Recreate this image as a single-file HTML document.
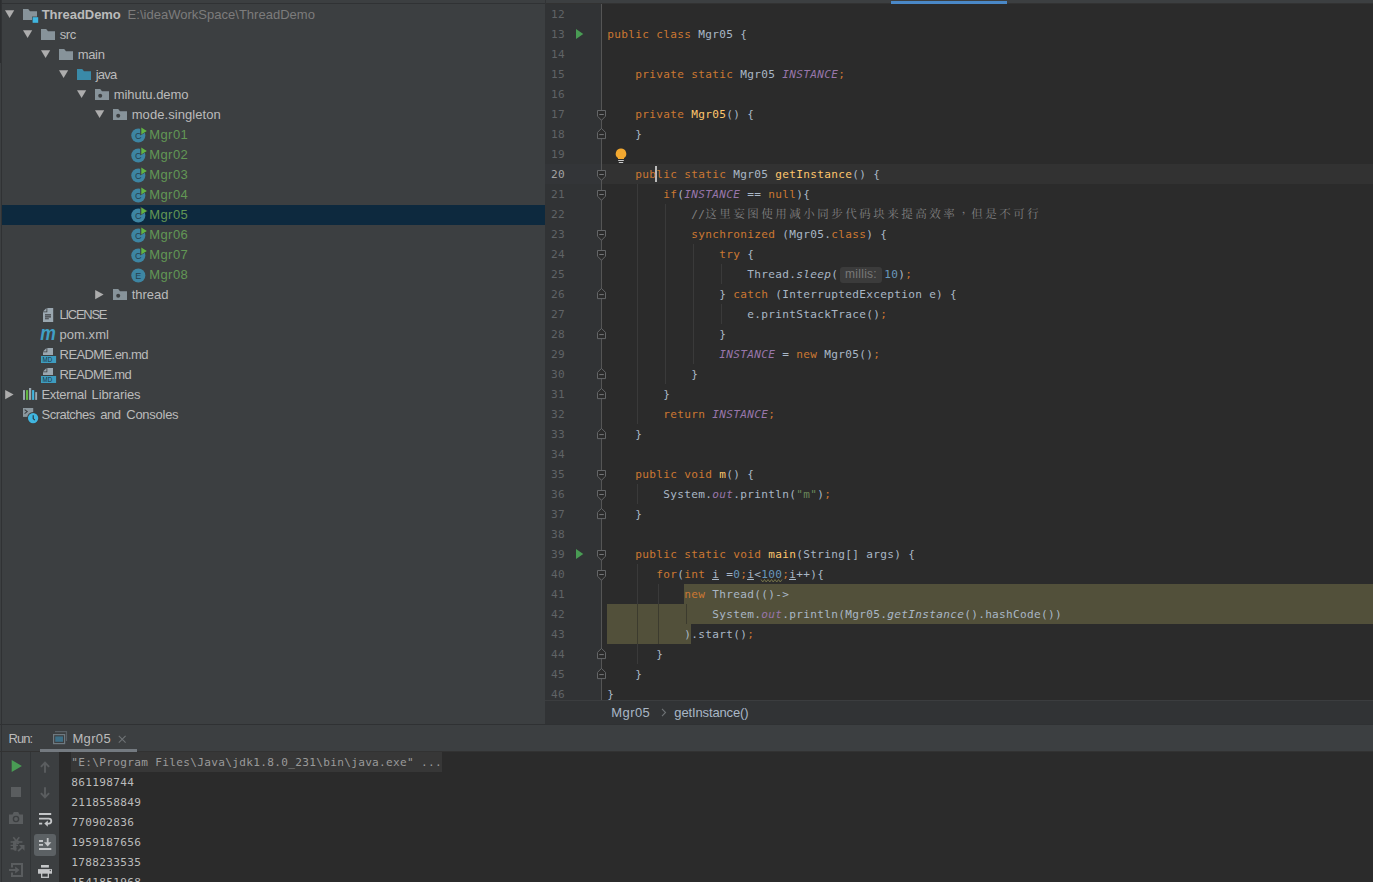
<!DOCTYPE html>
<html><head><meta charset="utf-8"><title>ThreadDemo</title>
<style>
html,body{margin:0;padding:0}
body{width:1373px;height:882px;overflow:hidden;background:#3c3f41;position:relative;font-family:'Liberation Sans', sans-serif;}
.b{position:absolute}
.a{position:absolute;overflow:visible}
.t{position:absolute;white-space:pre}
.cl{position:absolute;left:607.3px;height:20px;line-height:20px;white-space:pre;font:11.1px/20px 'DejaVu Sans Mono', 'Liberation Mono', monospace;color:#a9b7c6;letter-spacing:.317px}
.ln{position:absolute;left:545px;width:19.9px;text-align:right;height:20px;font:11.1px/20px 'DejaVu Sans Mono', 'Liberation Mono', monospace;color:#606366;letter-spacing:.317px}
.k{color:#cc7832}.f{color:#9876aa;font-style:italic}.m{color:#ffc66d}.n{color:#6897bb}.s{color:#6a8759}.c{color:#808080}.i{font-style:italic}
.u{position:relative}.u::after{content:'';position:absolute;left:-0.6px;width:7px;top:11.4px;height:1px;background:#a9b7c6}
.cj{font-family:'Liberation Mono', 'Noto Serif CJK SC', serif;font-size:11.5px;line-height:0}
.con{position:absolute;left:71.3px;height:20px;white-space:pre;font:11.1px/20px 'DejaVu Sans Mono', 'Liberation Mono', monospace;color:#bbbbbb;letter-spacing:.317px}
</style></head><body>

<div class="b" style="left:0;top:3px;width:545px;height:1px;background:#303234"></div>
<div class="b" style="left:545px;top:0;width:1px;height:4px;background:#323436;z-index:2"></div>
<div class="b" style="left:0;top:0;width:1px;height:63px;background:#2c2e30"></div>
<div class="b" style="left:1px;top:0;width:1px;height:882px;background:#303234;z-index:3"></div>
<div class="b" style="left:2px;top:205px;width:543px;height:20px;background:#0d293e"></div>
<svg class="a" style="left:5px;top:10px" width="10" height="9" viewBox="0 0 10 9"><path d="M0 0.3H9.2L4.6 8Z" fill="#adadad"/></svg>
<svg class="a" style="left:23px;top:9px" width="16" height="15" viewBox="0 0 16 15"><path d="M0 0H5.2L7 2.2H14V11H0Z" fill="#87939a"/><rect x="9" y="7.6" width="6.2" height="6.2" fill="#3c3f41"/><rect x="9.6" y="8.2" width="5.6" height="5.6" fill="#40b6e0"/></svg>
<span class="t" style="left:41.70px;top:4.50px;font:bold 13px 'Liberation Sans', sans-serif;line-height:20px;color:#bbbbbb;letter-spacing:-0.041px;">ThreadDemo</span>
<span class="t" style="left:127.60px;top:4.50px;font:13px 'Liberation Sans', sans-serif;line-height:20px;color:#7c7c7c;letter-spacing:0.015px;">E:\ideaWorkSpace\ThreadDemo</span>
<svg class="a" style="left:23px;top:30px" width="10" height="9" viewBox="0 0 10 9"><path d="M0 0.3H9.2L4.6 8Z" fill="#adadad"/></svg>
<svg class="a" style="left:41px;top:29px" width="16" height="15" viewBox="0 0 16 15"><path d="M0 0H5.2L7 2.2H14V11H0Z" fill="#87939a"/></svg>
<span class="t" style="left:59.70px;top:24.50px;font:13px 'Liberation Sans', sans-serif;line-height:20px;color:#bbbbbb;letter-spacing:-0.322px;">src</span>
<svg class="a" style="left:41px;top:50px" width="10" height="9" viewBox="0 0 10 9"><path d="M0 0.3H9.2L4.6 8Z" fill="#adadad"/></svg>
<svg class="a" style="left:59px;top:49px" width="16" height="15" viewBox="0 0 16 15"><path d="M0 0H5.2L7 2.2H14V11H0Z" fill="#87939a"/></svg>
<span class="t" style="left:77.70px;top:44.50px;font:13px 'Liberation Sans', sans-serif;line-height:20px;color:#bbbbbb;letter-spacing:-0.329px;">main</span>
<svg class="a" style="left:59px;top:70px" width="10" height="9" viewBox="0 0 10 9"><path d="M0 0.3H9.2L4.6 8Z" fill="#adadad"/></svg>
<svg class="a" style="left:77px;top:69px" width="16" height="15" viewBox="0 0 16 15"><path d="M0 0H5.2L7 2.2H14V11H0Z" fill="#3a8aa8"/></svg>
<span class="t" style="left:95.70px;top:64.50px;font:13px 'Liberation Sans', sans-serif;line-height:20px;color:#bbbbbb;letter-spacing:-0.753px;">java</span>
<svg class="a" style="left:77px;top:90px" width="10" height="9" viewBox="0 0 10 9"><path d="M0 0.3H9.2L4.6 8Z" fill="#adadad"/></svg>
<svg class="a" style="left:95px;top:89px" width="16" height="15" viewBox="0 0 16 15"><path d="M0 0H5.2L7 2.2H14V11H0Z" fill="#87939a"/><circle cx="5.2" cy="6.7" r="2" fill="#3c3f41"/></svg>
<span class="t" style="left:113.70px;top:84.50px;font:13px 'Liberation Sans', sans-serif;line-height:20px;color:#bbbbbb;letter-spacing:-0.026px;">mihutu.demo</span>
<svg class="a" style="left:95px;top:110px" width="10" height="9" viewBox="0 0 10 9"><path d="M0 0.3H9.2L4.6 8Z" fill="#adadad"/></svg>
<svg class="a" style="left:113px;top:109px" width="16" height="15" viewBox="0 0 16 15"><path d="M0 0H5.2L7 2.2H14V11H0Z" fill="#87939a"/><circle cx="5.2" cy="6.7" r="2" fill="#3c3f41"/></svg>
<span class="t" style="left:131.70px;top:104.50px;font:13px 'Liberation Sans', sans-serif;line-height:20px;color:#bbbbbb;letter-spacing:0.071px;">mode.singleton</span>
<svg class="a" style="left:130.8px;top:126.5px" width="17" height="17" viewBox="0 0 17 17"><circle cx="7.3" cy="8.5" r="7.05" fill="#3d85a2"/><text x="7.2" y="11.6" font-family="Liberation Sans, sans-serif" font-size="9" text-anchor="middle" fill="#24404e">C</text><path d="M9.2 -0.5L17 4L9.2 8.6Z" fill="#3c3f41"/><path d="M10.3 0.5L15.8 4L10.3 7.4Z" fill="#62b543"/></svg>
<span class="t" style="left:149.20px;top:124.50px;font:13px 'Liberation Sans', sans-serif;line-height:20px;color:#629755;letter-spacing:0.435px;">Mgr01</span>
<svg class="a" style="left:130.8px;top:146.5px" width="17" height="17" viewBox="0 0 17 17"><circle cx="7.3" cy="8.5" r="7.05" fill="#3d85a2"/><text x="7.2" y="11.6" font-family="Liberation Sans, sans-serif" font-size="9" text-anchor="middle" fill="#24404e">C</text><path d="M9.2 -0.5L17 4L9.2 8.6Z" fill="#3c3f41"/><path d="M10.3 0.5L15.8 4L10.3 7.4Z" fill="#62b543"/></svg>
<span class="t" style="left:149.20px;top:144.50px;font:13px 'Liberation Sans', sans-serif;line-height:20px;color:#629755;letter-spacing:0.435px;">Mgr02</span>
<svg class="a" style="left:130.8px;top:166.5px" width="17" height="17" viewBox="0 0 17 17"><circle cx="7.3" cy="8.5" r="7.05" fill="#3d85a2"/><text x="7.2" y="11.6" font-family="Liberation Sans, sans-serif" font-size="9" text-anchor="middle" fill="#24404e">C</text><path d="M9.2 -0.5L17 4L9.2 8.6Z" fill="#3c3f41"/><path d="M10.3 0.5L15.8 4L10.3 7.4Z" fill="#62b543"/></svg>
<span class="t" style="left:149.20px;top:164.50px;font:13px 'Liberation Sans', sans-serif;line-height:20px;color:#629755;letter-spacing:0.435px;">Mgr03</span>
<svg class="a" style="left:130.8px;top:186.5px" width="17" height="17" viewBox="0 0 17 17"><circle cx="7.3" cy="8.5" r="7.05" fill="#3d85a2"/><text x="7.2" y="11.6" font-family="Liberation Sans, sans-serif" font-size="9" text-anchor="middle" fill="#24404e">C</text><path d="M9.2 -0.5L17 4L9.2 8.6Z" fill="#3c3f41"/><path d="M10.3 0.5L15.8 4L10.3 7.4Z" fill="#62b543"/></svg>
<span class="t" style="left:149.20px;top:184.50px;font:13px 'Liberation Sans', sans-serif;line-height:20px;color:#629755;letter-spacing:0.435px;">Mgr04</span>
<svg class="a" style="left:130.8px;top:206.5px" width="17" height="17" viewBox="0 0 17 17"><circle cx="7.3" cy="8.5" r="7.05" fill="#3d85a2"/><text x="7.2" y="11.6" font-family="Liberation Sans, sans-serif" font-size="9" text-anchor="middle" fill="#24404e">C</text><path d="M9.2 -0.5L17 4L9.2 8.6Z" fill="#3c3f41"/><path d="M10.3 0.5L15.8 4L10.3 7.4Z" fill="#62b543"/></svg>
<span class="t" style="left:149.20px;top:204.50px;font:13px 'Liberation Sans', sans-serif;line-height:20px;color:#629755;letter-spacing:0.435px;">Mgr05</span>
<svg class="a" style="left:130.8px;top:226.5px" width="17" height="17" viewBox="0 0 17 17"><circle cx="7.3" cy="8.5" r="7.05" fill="#3d85a2"/><text x="7.2" y="11.6" font-family="Liberation Sans, sans-serif" font-size="9" text-anchor="middle" fill="#24404e">C</text><path d="M9.2 -0.5L17 4L9.2 8.6Z" fill="#3c3f41"/><path d="M10.3 0.5L15.8 4L10.3 7.4Z" fill="#62b543"/></svg>
<span class="t" style="left:149.20px;top:224.50px;font:13px 'Liberation Sans', sans-serif;line-height:20px;color:#629755;letter-spacing:0.435px;">Mgr06</span>
<svg class="a" style="left:130.8px;top:246.5px" width="17" height="17" viewBox="0 0 17 17"><circle cx="7.3" cy="8.5" r="7.05" fill="#3d85a2"/><text x="7.2" y="11.6" font-family="Liberation Sans, sans-serif" font-size="9" text-anchor="middle" fill="#24404e">C</text><path d="M9.2 -0.5L17 4L9.2 8.6Z" fill="#3c3f41"/><path d="M10.3 0.5L15.8 4L10.3 7.4Z" fill="#62b543"/></svg>
<span class="t" style="left:149.20px;top:244.50px;font:13px 'Liberation Sans', sans-serif;line-height:20px;color:#629755;letter-spacing:0.435px;">Mgr07</span>
<svg class="a" style="left:130.8px;top:266.5px" width="17" height="17" viewBox="0 0 17 17"><circle cx="7.3" cy="8.5" r="7.05" fill="#3d85a2"/><text x="7.2" y="11.6" font-family="Liberation Sans, sans-serif" font-size="9" text-anchor="middle" fill="#24404e">E</text></svg>
<span class="t" style="left:149.20px;top:264.50px;font:13px 'Liberation Sans', sans-serif;line-height:20px;color:#629755;letter-spacing:0.435px;">Mgr08</span>
<svg class="a" style="left:94.5px;top:289.9px" width="9" height="10" viewBox="0 0 9 10"><path d="M0.2 0V9.2L8.6 4.6Z" fill="#adadad"/></svg>
<svg class="a" style="left:113px;top:289px" width="16" height="15" viewBox="0 0 16 15"><path d="M0 0H5.2L7 2.2H14V11H0Z" fill="#87939a"/><circle cx="5.2" cy="6.7" r="2" fill="#3c3f41"/></svg>
<span class="t" style="left:131.70px;top:284.50px;font:13px 'Liberation Sans', sans-serif;line-height:20px;color:#bbbbbb;letter-spacing:-0.015px;">thread</span>
<svg class="a" style="left:43px;top:308px" width="12" height="14" viewBox="0 0 12 14"><path d="M4.3 0H10.2V14H0V4.3H4.3Z" fill="#9aa7b0"/><path d="M0 3.5L3.5 0V3.5Z" fill="#9aa7b0"/><path d="M2 6.9H8M2 8.9H8M2 10.8H5.8" stroke="#3c3f41" stroke-width="1.1"/></svg>
<span class="t" style="left:59.60px;top:304.50px;font:13px 'Liberation Sans', sans-serif;line-height:20px;color:#bbbbbb;letter-spacing:-1.290px;">LICENSE</span>
<svg class="a" style="left:40px;top:328px" width="17" height="14" viewBox="0 0 17 14"><text x="0.2" y="12.2" font-family="Liberation Sans, sans-serif" font-size="20" font-weight="bold" font-style="italic" textLength="15.6" lengthAdjust="spacingAndGlyphs" fill="#409fc6">m</text></svg>
<span class="t" style="left:59.60px;top:324.50px;font:13px 'Liberation Sans', sans-serif;line-height:20px;color:#bbbbbb;letter-spacing:0.029px;">pom.xml</span>
<svg class="a" style="left:41px;top:348px" width="16" height="15" viewBox="0 0 16 15"><path d="M6.3 0H12V7H2V4.3H6.3Z" fill="#9aa7b0"/><path d="M2 3.5L5.5 0V3.5Z" fill="#9aa7b0"/><rect x="0" y="8" width="15.1" height="7" fill="#3e9cbf"/><text x="1.6" y="13.9" font-family="Liberation Sans, sans-serif" font-size="6.6" textLength="9.6" lengthAdjust="spacingAndGlyphs" fill="#1d3340">MD</text></svg>
<span class="t" style="left:59.60px;top:344.50px;font:13px 'Liberation Sans', sans-serif;line-height:20px;color:#bbbbbb;letter-spacing:-0.598px;">README.en.md</span>
<svg class="a" style="left:41px;top:368px" width="16" height="15" viewBox="0 0 16 15"><path d="M6.3 0H12V7H2V4.3H6.3Z" fill="#9aa7b0"/><path d="M2 3.5L5.5 0V3.5Z" fill="#9aa7b0"/><rect x="0" y="8" width="15.1" height="7" fill="#3e9cbf"/><text x="1.6" y="13.9" font-family="Liberation Sans, sans-serif" font-size="6.6" textLength="9.6" lengthAdjust="spacingAndGlyphs" fill="#1d3340">MD</text></svg>
<span class="t" style="left:59.60px;top:364.50px;font:13px 'Liberation Sans', sans-serif;line-height:20px;color:#bbbbbb;letter-spacing:-0.650px;">README.md</span>
<svg class="a" style="left:4.5px;top:389.9px" width="9" height="10" viewBox="0 0 9 10"><path d="M0.2 0V9.2L8.6 4.6Z" fill="#adadad"/></svg>
<svg class="a" style="left:23px;top:387.9px" width="15" height="12" viewBox="0 0 15 12"><rect x="0" y="2.1" width="2" height="9.8" fill="#9aa7b0"/><rect x="3" y="2.1" width="2.1" height="9.8" fill="#62b543"/><rect x="6" y="0" width="2.2" height="11.9" fill="#9aa7b0"/><rect x="9.1" y="2.1" width="2.1" height="9.8" fill="#40b6e0"/><rect x="12.2" y="4.1" width="1.9" height="7.8" fill="#9aa7b0"/></svg>
<span class="t" style="left:41.50px;top:384.50px;font:13px 'Liberation Sans', sans-serif;line-height:20px;color:#bbbbbb;letter-spacing:-0.329px;">External</span>
<span class="t" style="left:91.60px;top:384.50px;font:13px 'Liberation Sans', sans-serif;line-height:20px;color:#bbbbbb;letter-spacing:-0.107px;">Libraries</span>
<svg class="a" style="left:23px;top:407.9px" width="17" height="16" viewBox="0 0 17 16"><path d="M0 0H10.2V8.9H0Z" fill="#8b979e"/><path d="M1.6 1.6L4.2 3.6L1.6 5.6" stroke="#3c3f41" stroke-width="1.1" fill="none"/><circle cx="10.1" cy="10.1" r="6" fill="#3c3f41"/><circle cx="10.1" cy="10.1" r="5.15" fill="#40b6e0"/><path d="M10.2 7.3V10.6L11.8 12.2" stroke="#23323a" stroke-width="1.1" fill="none"/></svg>
<span class="t" style="left:41.50px;top:404.50px;font:13px 'Liberation Sans', sans-serif;line-height:20px;color:#bbbbbb;letter-spacing:-0.502px;">Scratches</span>
<span class="t" style="left:100.30px;top:404.50px;font:13px 'Liberation Sans', sans-serif;line-height:20px;color:#bbbbbb;letter-spacing:-0.502px;">and</span>
<span class="t" style="left:126.30px;top:404.50px;font:13px 'Liberation Sans', sans-serif;line-height:20px;color:#bbbbbb;letter-spacing:-0.272px;">Consoles</span>
<div class="b" style="left:545px;top:0;width:828px;height:4px;background:#3c3f41"></div>
<div class="b" style="left:545px;top:3px;width:828px;height:1px;background:#323232"></div>
<div class="b" style="left:891px;top:1px;width:116px;height:3px;background:#4a88c7"></div>
<div class="b" style="left:545px;top:4px;width:57px;height:696px;background:#313335"></div>
<div class="b" style="left:602px;top:4px;width:771px;height:696px;background:#2b2b2b"></div>
<div class="b" style="left:545px;top:164px;width:57px;height:20px;background:#333538"></div>
<div class="b" style="left:602px;top:164px;width:771px;height:20px;background:#323232"></div>
<div class="b" style="left:684px;top:584px;width:689px;height:20px;background:#52503a"></div>
<div class="b" style="left:607px;top:604px;width:766px;height:20px;background:#52503a"></div>
<div class="b" style="left:607px;top:624px;width:84px;height:20px;background:#52503a"></div>
<div class="b" style="left:601px;top:4px;width:1px;height:696px;background:#555555"></div>
<div class="b" style="left:637px;top:184px;width:1px;height:240px;background:#3a3a3a"></div>
<div class="b" style="left:665px;top:204px;width:1px;height:180px;background:#3a3a3a"></div>
<div class="b" style="left:693px;top:244px;width:1px;height:120px;background:#3a3a3a"></div>
<div class="b" style="left:721px;top:264px;width:1px;height:20px;background:#3a3a3a"></div>
<div class="b" style="left:721px;top:304px;width:1px;height:20px;background:#3a3a3a"></div>
<div class="b" style="left:637px;top:484px;width:1px;height:20px;background:#3a3a3a"></div>
<div class="b" style="left:637px;top:564px;width:1px;height:100px;background:#3a3a3a"></div>
<div class="b" style="left:658px;top:584px;width:1px;height:60px;background:#3a3a3a"></div>
<div class="b" style="left:686px;top:604px;width:1px;height:20px;background:#3a3a3a"></div>
<div class="b" style="left:637px;top:604px;width:1px;height:40px;background:#3c3b2e"></div>
<div class="b" style="left:658px;top:604px;width:1px;height:40px;background:#3c3b2e"></div>
<div class="b" style="left:686px;top:604px;width:1px;height:20px;background:#3c3b2e"></div>
<div class="ln" style="top:4.5px">12</div>
<div class="ln" style="top:24.5px">13</div>
<div class="ln" style="top:44.5px">14</div>
<div class="ln" style="top:64.5px">15</div>
<div class="ln" style="top:84.5px">16</div>
<div class="ln" style="top:104.5px">17</div>
<div class="ln" style="top:124.5px">18</div>
<div class="ln" style="top:144.5px">19</div>
<div class="ln" style="top:164.5px;color:#a4a3a3">20</div>
<div class="ln" style="top:184.5px">21</div>
<div class="ln" style="top:204.5px">22</div>
<div class="ln" style="top:224.5px">23</div>
<div class="ln" style="top:244.5px">24</div>
<div class="ln" style="top:264.5px">25</div>
<div class="ln" style="top:284.5px">26</div>
<div class="ln" style="top:304.5px">27</div>
<div class="ln" style="top:324.5px">28</div>
<div class="ln" style="top:344.5px">29</div>
<div class="ln" style="top:364.5px">30</div>
<div class="ln" style="top:384.5px">31</div>
<div class="ln" style="top:404.5px">32</div>
<div class="ln" style="top:424.5px">33</div>
<div class="ln" style="top:444.5px">34</div>
<div class="ln" style="top:464.5px">35</div>
<div class="ln" style="top:484.5px">36</div>
<div class="ln" style="top:504.5px">37</div>
<div class="ln" style="top:524.5px">38</div>
<div class="ln" style="top:544.5px">39</div>
<div class="ln" style="top:564.5px">40</div>
<div class="ln" style="top:584.5px">41</div>
<div class="ln" style="top:604.5px">42</div>
<div class="ln" style="top:624.5px">43</div>
<div class="ln" style="top:644.5px">44</div>
<div class="ln" style="top:664.5px">45</div>
<div class="ln" style="top:684.5px">46</div>
<svg class="a" style="left:576px;top:29px" width="8" height="10" viewBox="0 0 8 10"><path d="M0 0L7.3 5L0 10Z" fill="#499c54"/></svg>
<svg class="a" style="left:576px;top:549px" width="8" height="10" viewBox="0 0 8 10"><path d="M0 0L7.3 5L0 10Z" fill="#499c54"/></svg>
<svg class="a" style="left:597px;top:110px" width="9" height="11" viewBox="0 0 9 11"><path d="M0.5 0.5H8.5V6.2L4.5 10.3L0.5 6.2Z" fill="#2b2b2b" stroke="#646668" stroke-width="1"/><path d="M2.3 4.5H6.8" stroke="#747678" stroke-width="1"/></svg>
<svg class="a" style="left:597px;top:170px" width="9" height="11" viewBox="0 0 9 11"><path d="M0.5 0.5H8.5V6.2L4.5 10.3L0.5 6.2Z" fill="#2b2b2b" stroke="#646668" stroke-width="1"/><path d="M2.3 4.5H6.8" stroke="#747678" stroke-width="1"/></svg>
<svg class="a" style="left:597px;top:190px" width="9" height="11" viewBox="0 0 9 11"><path d="M0.5 0.5H8.5V6.2L4.5 10.3L0.5 6.2Z" fill="#2b2b2b" stroke="#646668" stroke-width="1"/><path d="M2.3 4.5H6.8" stroke="#747678" stroke-width="1"/></svg>
<svg class="a" style="left:597px;top:230px" width="9" height="11" viewBox="0 0 9 11"><path d="M0.5 0.5H8.5V6.2L4.5 10.3L0.5 6.2Z" fill="#2b2b2b" stroke="#646668" stroke-width="1"/><path d="M2.3 4.5H6.8" stroke="#747678" stroke-width="1"/></svg>
<svg class="a" style="left:597px;top:250px" width="9" height="11" viewBox="0 0 9 11"><path d="M0.5 0.5H8.5V6.2L4.5 10.3L0.5 6.2Z" fill="#2b2b2b" stroke="#646668" stroke-width="1"/><path d="M2.3 4.5H6.8" stroke="#747678" stroke-width="1"/></svg>
<svg class="a" style="left:597px;top:470px" width="9" height="11" viewBox="0 0 9 11"><path d="M0.5 0.5H8.5V6.2L4.5 10.3L0.5 6.2Z" fill="#2b2b2b" stroke="#646668" stroke-width="1"/><path d="M2.3 4.5H6.8" stroke="#747678" stroke-width="1"/></svg>
<svg class="a" style="left:597px;top:490px" width="9" height="11" viewBox="0 0 9 11"><path d="M0.5 0.5H8.5V6.2L4.5 10.3L0.5 6.2Z" fill="#2b2b2b" stroke="#646668" stroke-width="1"/><path d="M2.3 4.5H6.8" stroke="#747678" stroke-width="1"/></svg>
<svg class="a" style="left:597px;top:550px" width="9" height="11" viewBox="0 0 9 11"><path d="M0.5 0.5H8.5V6.2L4.5 10.3L0.5 6.2Z" fill="#2b2b2b" stroke="#646668" stroke-width="1"/><path d="M2.3 4.5H6.8" stroke="#747678" stroke-width="1"/></svg>
<svg class="a" style="left:597px;top:570px" width="9" height="11" viewBox="0 0 9 11"><path d="M0.5 0.5H8.5V6.2L4.5 10.3L0.5 6.2Z" fill="#2b2b2b" stroke="#646668" stroke-width="1"/><path d="M2.3 4.5H6.8" stroke="#747678" stroke-width="1"/></svg>
<svg class="a" style="left:597px;top:128px" width="9" height="11" viewBox="0 0 9 11"><path d="M0.5 10.6H8.5V4.4L4.5 0.4L0.5 4.4Z" fill="#2b2b2b" stroke="#646668" stroke-width="1"/><path d="M2.3 6.6H6.8" stroke="#747678" stroke-width="1"/></svg>
<svg class="a" style="left:597px;top:288px" width="9" height="11" viewBox="0 0 9 11"><path d="M0.5 10.6H8.5V4.4L4.5 0.4L0.5 4.4Z" fill="#2b2b2b" stroke="#646668" stroke-width="1"/><path d="M2.3 6.6H6.8" stroke="#747678" stroke-width="1"/></svg>
<svg class="a" style="left:597px;top:328px" width="9" height="11" viewBox="0 0 9 11"><path d="M0.5 10.6H8.5V4.4L4.5 0.4L0.5 4.4Z" fill="#2b2b2b" stroke="#646668" stroke-width="1"/><path d="M2.3 6.6H6.8" stroke="#747678" stroke-width="1"/></svg>
<svg class="a" style="left:597px;top:368px" width="9" height="11" viewBox="0 0 9 11"><path d="M0.5 10.6H8.5V4.4L4.5 0.4L0.5 4.4Z" fill="#2b2b2b" stroke="#646668" stroke-width="1"/><path d="M2.3 6.6H6.8" stroke="#747678" stroke-width="1"/></svg>
<svg class="a" style="left:597px;top:388px" width="9" height="11" viewBox="0 0 9 11"><path d="M0.5 10.6H8.5V4.4L4.5 0.4L0.5 4.4Z" fill="#2b2b2b" stroke="#646668" stroke-width="1"/><path d="M2.3 6.6H6.8" stroke="#747678" stroke-width="1"/></svg>
<svg class="a" style="left:597px;top:428px" width="9" height="11" viewBox="0 0 9 11"><path d="M0.5 10.6H8.5V4.4L4.5 0.4L0.5 4.4Z" fill="#2b2b2b" stroke="#646668" stroke-width="1"/><path d="M2.3 6.6H6.8" stroke="#747678" stroke-width="1"/></svg>
<svg class="a" style="left:597px;top:508px" width="9" height="11" viewBox="0 0 9 11"><path d="M0.5 10.6H8.5V4.4L4.5 0.4L0.5 4.4Z" fill="#2b2b2b" stroke="#646668" stroke-width="1"/><path d="M2.3 6.6H6.8" stroke="#747678" stroke-width="1"/></svg>
<svg class="a" style="left:597px;top:648px" width="9" height="11" viewBox="0 0 9 11"><path d="M0.5 10.6H8.5V4.4L4.5 0.4L0.5 4.4Z" fill="#2b2b2b" stroke="#646668" stroke-width="1"/><path d="M2.3 6.6H6.8" stroke="#747678" stroke-width="1"/></svg>
<svg class="a" style="left:597px;top:668px" width="9" height="11" viewBox="0 0 9 11"><path d="M0.5 10.6H8.5V4.4L4.5 0.4L0.5 4.4Z" fill="#2b2b2b" stroke="#646668" stroke-width="1"/><path d="M2.3 6.6H6.8" stroke="#747678" stroke-width="1"/></svg>
<svg class="a" style="left:615px;top:148.4px" width="12" height="16" viewBox="0 0 12 16"><path d="M6 0.5A5.2 5.2 0 0 1 9 10V11H3V10A5.2 5.2 0 0 1 6 0.5Z" fill="#f2a830"/><path d="M3.2 12.5H8.8M3.8 14.5H8.2" stroke="#c9c9c9" stroke-width="1"/></svg>
<div class="b" style="left:655px;top:166px;width:2px;height:16px;background:#bbbbbb"></div>
<div class="cl" style="top:24.6px"><span class="k">public class</span> Mgr05 {</div>
<div class="cl" style="top:64.6px">    <span class="k">private static</span> Mgr05 <span class="f">INSTANCE</span><span class="k">;</span></div>
<div class="cl" style="top:104.6px">    <span class="k">private</span> <span class="m">Mgr05</span>() {</div>
<div class="cl" style="top:124.6px">    }</div>
<div class="cl" style="top:164.6px">    <span class="k">public static</span> Mgr05 <span class="m">getInstance</span>() {</div>
<div class="cl" style="top:184.6px">        <span class="k">if</span>(<span class="f">INSTANCE</span> == <span class="k">null</span>){</div>
<div class="cl" style="top:204.6px">            <span class="c">//<span class="cj" style="letter-spacing:2.500px">这里妄图使用减小同步代码块来提高效率<span style="position:relative;left:4.5px;top:-4.3px">，</span>但是不可行</span></span></div>
<div class="cl" style="top:224.6px">            <span class="k">synchronized</span> (Mgr05.<span class="k">class</span>) {</div>
<div class="cl" style="top:244.6px">                <span class="k">try</span> {</div>
<div class="cl" style="top:264.6px">                    Thread.<span class="i">sleep</span>(<span style="display:inline-block;letter-spacing:0;width:46.1px;height:20px;vertical-align:top;position:relative"><span style="position:absolute;left:1.6px;top:2px;width:42px;height:16px;border-radius:3px;background:#3b3b3b"></span><span style="position:absolute;left:6.9px;top:0;font:12px 'Liberation Sans', sans-serif;line-height:19px;color:#787878;letter-spacing:0.267px">millis:</span></span><span class="n">10</span>)<span class="k">;</span></div>
<div class="cl" style="top:284.6px">                } <span class="k">catch</span> (InterruptedException e) {</div>
<div class="cl" style="top:304.6px">                    e.printStackTrace()<span class="k">;</span></div>
<div class="cl" style="top:324.6px">                }</div>
<div class="cl" style="top:344.6px">                <span class="f">INSTANCE</span> = <span class="k">new</span> Mgr05()<span class="k">;</span></div>
<div class="cl" style="top:364.6px">            }</div>
<div class="cl" style="top:384.6px">        }</div>
<div class="cl" style="top:404.6px">        <span class="k">return</span> <span class="f">INSTANCE</span><span class="k">;</span></div>
<div class="cl" style="top:424.6px">    }</div>
<div class="cl" style="top:464.6px">    <span class="k">public void</span> <span class="m">m</span>() {</div>
<div class="cl" style="top:484.6px">        System.<span class="f">out</span>.println(<span class="s">"m"</span>)<span class="k">;</span></div>
<div class="cl" style="top:504.6px">    }</div>
<div class="cl" style="top:544.6px">    <span class="k">public static void</span> <span class="m">main</span>(String[] args) {</div>
<div class="cl" style="top:564.6px">       <span class="k">for</span>(<span class="k">int</span> <span class="u">i</span> =<span class="n">0</span><span class="k">;</span><span class="u">i</span>&lt;<span style="position:relative"><span class="n">100</span><svg class="a" style="left:-0.6px;top:11.8px" width="22" height="4" viewBox="0 0 22 4"><path d="M0 0.5L1.75 3L3.5 0.5L5.25 3L7 0.5L8.75 3L10.5 0.5L12.25 3L14 0.5L15.75 3L17.5 0.5L19.25 3L21 0.5" fill="none" stroke="#7d7a4c" stroke-width="0.9"/></svg></span><span class="k">;</span><span class="u">i</span>++){</div>
<div class="cl" style="top:584.6px">           <span class="k">new</span> Thread(()-&gt;</div>
<div class="cl" style="top:604.6px">               System.<span class="f">out</span>.println(Mgr05.<span class="i">getInstance</span>().hashCode())</div>
<div class="cl" style="top:624.6px">           ).start()<span class="k">;</span></div>
<div class="cl" style="top:644.6px">       }</div>
<div class="cl" style="top:664.6px">    }</div>
<div class="cl" style="top:684.6px">}</div>
<div class="b" style="left:545px;top:700px;width:828px;height:24px;background:#313335"></div>
<div class="b" style="left:545px;top:700px;width:828px;height:1px;background:#3b3d3f"></div>
<span class="t" style="left:611.30px;top:702.50px;font:13px 'Liberation Sans', sans-serif;line-height:20px;color:#a9b7c6;letter-spacing:0.410px;">Mgr05</span>
<svg class="a" style="left:661px;top:708px" width="6" height="9" viewBox="0 0 6 9"><path d="M1 0.8L4.5 4.5L1 8.2" fill="none" stroke="#6e7275" stroke-width="1.1"/></svg>
<span class="t" style="left:674.30px;top:702.50px;font:13px 'Liberation Sans', sans-serif;line-height:20px;color:#a9b7c6;letter-spacing:-0.131px;">getInstance()</span>
<div class="b" style="left:0;top:724px;width:1373px;height:1px;background:#2f3133"></div>
<div class="b" style="left:2px;top:725px;width:1371px;height:26px;background:#3c3f41"></div>
<div class="b" style="left:0;top:751px;width:1373px;height:1px;background:#323232"></div>
<div class="b" style="left:59px;top:752px;width:1314px;height:130px;background:#2b2b2b"></div>
<div class="b" style="left:30px;top:752px;width:1px;height:130px;background:#323537"></div>
<div class="b" style="left:40px;top:749px;width:97px;height:3px;background:#747a80"></div>
<span class="t" style="left:8.40px;top:728.50px;font:13px 'Liberation Sans', sans-serif;line-height:20px;color:#bbbbbb;letter-spacing:-0.890px;">Run:</span>
<svg class="a" style="left:53px;top:731px" width="15" height="13" viewBox="0 0 15 13"><path d="M2 0.6H13.5V10" fill="none" stroke="#596066" stroke-width="1.2"/><rect x="0.6" y="3.6" width="11" height="9" fill="none" stroke="#6f7a80" stroke-width="1.2"/><rect x="2.2" y="5.4" width="7.8" height="5.4" fill="#3d6f87"/></svg>
<span class="t" style="left:72.40px;top:728.50px;font:13px 'Liberation Sans', sans-serif;line-height:20px;color:#bbbbbb;letter-spacing:0.360px;">Mgr05</span>
<svg class="a" style="left:118px;top:735px" width="9" height="9" viewBox="0 0 9 9"><path d="M0.8 0.8L7.6 7.6M7.6 0.8L0.8 7.6" stroke="#6e7275" stroke-width="1.1"/></svg>
<div class="b" style="left:71px;top:752px;width:371px;height:20px;background:#373737"></div>
<div class="con" style="top:752.7px;color:#9a9a9a">&quot;E:\Program Files\Java\jdk1.8.0_231\bin\java.exe&quot; ...</div>
<div class="con" style="top:772.7px;color:#bbbbbb">861198744</div>
<div class="con" style="top:792.7px;color:#bbbbbb">2118558849</div>
<div class="con" style="top:812.7px;color:#bbbbbb">770902836</div>
<div class="con" style="top:832.7px;color:#bbbbbb">1959187656</div>
<div class="con" style="top:852.7px;color:#bbbbbb">1788233535</div>
<div class="con" style="top:872.7px;color:#bbbbbb">1541851968</div>
<svg class="a" style="left:11px;top:760px" width="11" height="12" viewBox="0 0 11 12"><path d="M0.7 0L10.9 6L0.7 12Z" fill="#499c54"/></svg>
<div class="b" style="left:11px;top:787px;width:10px;height:10px;background:#5a5d5f"></div>
<svg class="a" style="left:9px;top:812px" width="14" height="12" viewBox="0 0 14 12"><path d="M0 2.5H3.5L4.8 0H9.2L10.5 2.5H14V12H0Z" fill="#5a5d5f"/><circle cx="7" cy="7" r="2.6" fill="none" stroke="#3c3f41" stroke-width="1.4"/></svg>
<svg class="a" style="left:9.5px;top:837px" width="15" height="15" viewBox="0 0 15 15"><path d="M3.3 0.2L5.6 3M9.3 0.2L7 3" stroke="#5a5d5f" stroke-width="1.5"/><path d="M3 5.6Q6.4 -0.8 9.8 5.6Z" fill="#5a5d5f"/><rect x="0.6" y="4.2" width="11.8" height="1.6" fill="#5a5d5f"/><path d="M3 4.2H6.4V13.8H5Q3 13.4 3 11Z" fill="#5a5d5f"/><path d="M0.6 8.4H8M0.6 11.8H6.4" stroke="#5a5d5f" stroke-width="1.4"/><path d="M6.4 5.8H9.6L8.6 7H6.4Z" fill="#5a5d5f"/><path d="M9 8.1H14.5V13.8Z" fill="#5a5d5f"/><path d="M13.4 9.2L8.1 14.1" stroke="#5a5d5f" stroke-width="1.9"/></svg>
<svg class="a" style="left:9px;top:863px" width="14" height="14" viewBox="0 0 14 14"><path d="M3 4.4V1H13V13H3V9.6" fill="none" stroke="#5a5d5f" stroke-width="2"/><path d="M0 7H7" fill="none" stroke="#5a5d5f" stroke-width="2"/><path d="M6.2 3.4L10.6 7L6.2 10.6Z" fill="#5a5d5f"/></svg>
<svg class="a" style="left:40px;top:761px" width="10" height="12" viewBox="0 0 10 12"><path d="M5 11.7V1.6M0.9 5.8L5 1.6L9.1 5.8" fill="none" stroke="#5a5d5f" stroke-width="1.9"/></svg>
<svg class="a" style="left:40px;top:787px" width="10" height="12" viewBox="0 0 10 12"><path d="M5 0.3V10.4M0.9 6.2L5 10.4L9.1 6.2" fill="none" stroke="#5a5d5f" stroke-width="1.9"/></svg>
<svg class="a" style="left:39px;top:813px" width="13" height="14" viewBox="0 0 13 14"><path d="M0 1H12.2M0 5.6H9.8A2.5 2.5 0 0 1 9.8 10.6H8" fill="none" stroke="#c4c6c8" stroke-width="1.8"/><path d="M8.8 7.4L5.3 10.6L8.8 13.8Z" fill="#c4c6c8"/><path d="M0 10.6H3.2" stroke="#c4c6c8" stroke-width="1.8"/></svg>
<div class="b" style="left:34px;top:834px;width:22px;height:22px;border-radius:3px;background:#5c6164"></div>
<svg class="a" style="left:39px;top:838px" width="13" height="12" viewBox="0 0 13 12"><path d="M0 3H4M0 6.8H4M0 11H12.3" stroke="#c4c6c8" stroke-width="1.8"/><path d="M8.7 0V6" stroke="#c4c6c8" stroke-width="1.8"/><path d="M5 4.2L8.7 8.4L12.4 4.2Z" fill="#c4c6c8"/></svg>
<svg class="a" style="left:38px;top:865px" width="14" height="13" viewBox="0 0 14 13"><rect x="3" y="0" width="7.9" height="2.6" fill="#c4c6c8"/><rect x="0" y="4.1" width="14" height="4.6" fill="#c4c6c8"/><rect x="3.65" y="8" width="6.7" height="4.3" fill="#3c3f41" stroke="#c4c6c8" stroke-width="1.3"/><circle cx="12.3" cy="5.5" r="0.65" fill="#3c3f41"/></svg>
</body></html>
